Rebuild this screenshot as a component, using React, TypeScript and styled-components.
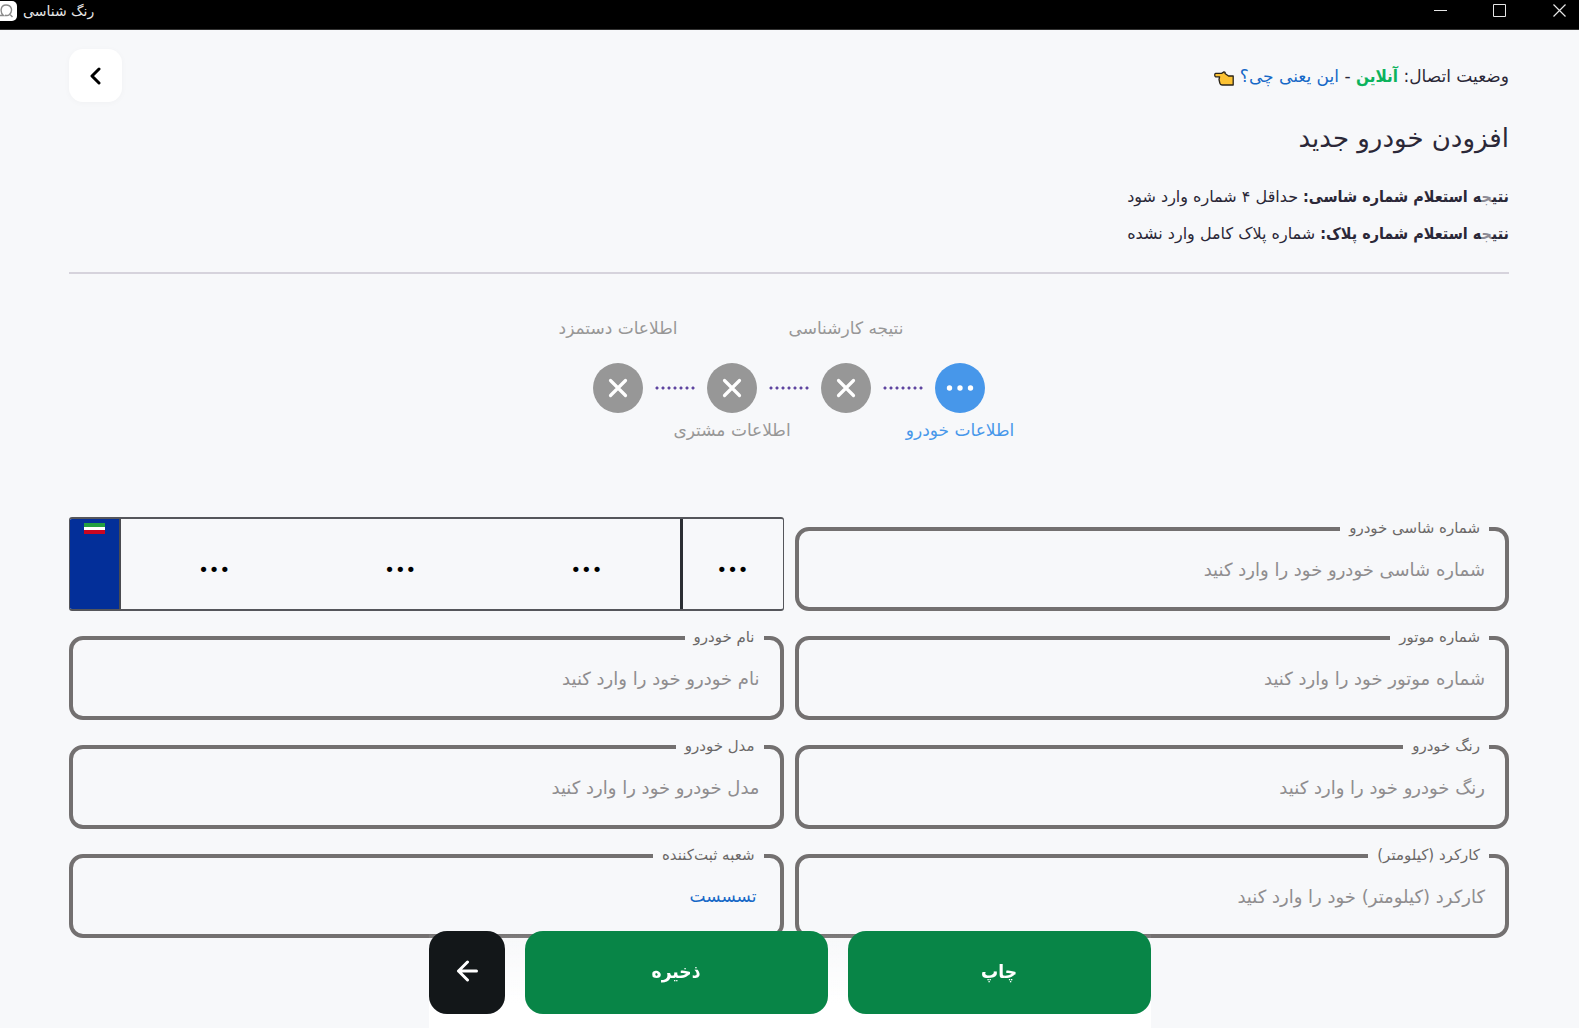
import React, { useId } from "react";
import styled, { createGlobalStyle } from "styled-components";

const GlobalStyle = createGlobalStyle`
  *, *::before, *::after { box-sizing: border-box; }
  body {
    margin: 0;
    background: #f7f8fa;
    color: #2b2838;
    font-family: "DejaVu Sans", "Noto Sans", sans-serif;
  }
  button, input { font-family: inherit; }
`;

const TitleBar = styled.header`
  display: flex;
  align-items: center;
  justify-content: space-between;
  height: 30px;
  padding-bottom: 8px;
  border-bottom: 1px solid #333;
  background: #000;
  color: #e6e6e6;
`;

const AppName = styled.div`
  display: flex;
  align-items: center;
  gap: 6px;
  font-size: 14px;
  line-height: 22px;
`;

const WindowButtons = styled.div`
  display: flex;
`;

const WindowButton = styled.button`
  display: grid;
  place-items: center;
  width: 59px;
  height: 22px;
  padding: 0;
  border: 0;
  background: none;
  color: #e6e6e6;
`;

const CloseButton = styled(WindowButton)`
  width: 40px;
  margin-left: 10px;
`;

const Main = styled.main`
  padding: 19px 70px 90px 69px;
`;

const Head = styled.section`
  display: flex;
  align-items: flex-start;
  justify-content: space-between;
  padding-bottom: 20px;
  border-bottom: 2px solid #d6d3dc;
`;

const Status = styled.p`
  margin: 0 0 14px;
  font-size: 17px;
  line-height: 54px;
`;

const CondensedStrong = styled.strong`
  font-family: "DejaVu Sans Condensed", "DejaVu Sans", sans-serif;
`;

const Online = styled(CondensedStrong)`
  color: #0cb35c;
`;

const HelpLink = styled.a`
  color: #1668c7;
  text-decoration: none;
`;

const PointingHand = styled.svg`
  margin-right: 6px;
  vertical-align: -4px;
`;

const Title = styled.h1`
  margin: 0 0 19px;
  font-size: 26px;
  font-weight: 400;
  line-height: 42px;
`;

const Result = styled.p`
  margin: 0;
  font-size: 16px;
  line-height: 37px;
`;

const Faint = styled.span`
  color: #8d8b95;
`;

const BackButton = styled.button`
  display: grid;
  place-items: center;
  width: 53px;
  height: 53px;
  padding: 0 2px 0 0;
  border: 0;
  border-radius: 14px;
  background: #fff;
  box-shadow: 0 1px 6px rgba(0, 0, 0, 0.03);
`;

const Stepper = styled.ol`
  display: flex;
  justify-content: center;
  margin: 42px 0 75px;
  padding: 0;
  list-style: none;
`;

const StepSlot = styled.div`
  display: flex;
  justify-content: center;
  height: 24px;
`;

const StepLabel = styled.span`
  flex: none;
  font-size: 17px;
  line-height: 24px;
  white-space: nowrap;
`;

const Circle = styled.span<{ $active?: boolean }>`
  display: grid;
  place-items: center;
  width: 50px;
  height: 50px;
  margin: 23px 0 5px;
  border-radius: 50%;
  background: ${(p) => (p.$active ? "#4797ea" : "#979797")};
`;

const Step = styled.li<{ $active?: boolean }>`
  display: flex;
  flex-direction: column;
  width: 50px;
  color: ${(p) => (p.$active ? "#4797ea" : "#979797")};
`;

const Connector = styled.li`
  width: 42px;
  height: 4px;
  margin: 70px 11px 0;
  background: radial-gradient(circle, #5f45a0 1px, transparent 2px) 0 0 / 6px 4px;
`;

const Form = styled.form`
  display: grid;
  grid-template-columns: repeat(2, minmax(0, 1fr));
  gap: 15px 11px;
`;

const Fieldset = styled.fieldset`
  min-width: 0;
  height: 94px;
  margin: 0;
  padding: 0 16px;
  border: 4px solid #737070;
  border-radius: 14px;
`;

const Legend = styled.legend`
  padding: 0 9px 2px;
  color: #6b6868;
  font-size: 15px;
  line-height: 22px;
`;

const Input = styled.input<{ $filled?: boolean }>`
  display: block;
  width: 100%;
  height: 56px;
  padding: 0 ${(p) => (p.$filled ? 7 : 4)}px;
  border: 0;
  outline: 0;
  background: transparent;
  color: #1668c7;
  font-size: ${(p) => (p.$filled ? 17 : 18)}px;

  &::placeholder { color: #8f8d8f; opacity: 1; overflow: visible; }
`;

const Plate = styled.div`
  display: flex;
  direction: ltr;
  height: 94px;
  border: solid #55565b;
  border-width: 2px 1px;
  border-radius: 3px;
  overflow: hidden;
`;

const PlateFlag = styled.div`
  flex: none;
  width: 51px;
  padding-top: 4px;
  border-right: 2px solid #4a4b50;
  background: #032f99;
`;

const Flag = styled.svg`
  display: block;
  margin: 0 auto;
`;

const PlateNumbers = styled.div`
  display: flex;
  flex: 1;
  min-width: 0;
`;

const PlateRegion = styled.div`
  display: flex;
  flex: none;
  width: 103px;
  border-left: 3px solid #2b2e33;
`;

const PlateInput = styled.input`
  flex: 1;
  min-width: 0;
  width: 0;
  height: 90px;
  padding: 10px 0 0;
  border: 0;
  outline: 0;
  background: transparent;
  color: #000;
  font-size: 18px;
  text-align: center;

  &::placeholder { color: #000; opacity: 1; }
`;

const Actions = styled.div`
  position: fixed;
  bottom: 0;
  left: 0;
  right: 0;
  display: flex;
  gap: 20px;
  width: 722px;
  margin: 0 auto;
  padding-bottom: 14px;
  background: linear-gradient(rgba(255, 255, 255, 0), #fff 75%);
`;

const ActionButton = styled.button<{ $dark?: boolean }>`
  display: grid;
  flex: ${(p) => (p.$dark ? "0 0 76px" : "1")};
  place-items: center;
  height: 83px;
  padding: 0 0 4px;
  border: 0;
  border-radius: 18px;
  background: ${(p) => (p.$dark ? "#131719" : "#088547")};
  color: #fff;
  font-family: "DejaVu Sans Condensed", "DejaVu Sans", sans-serif;
  font-size: 19px;
  font-weight: 700;
`;

type Field = { label: string; placeholder?: string; value?: string };

function TextField({ label, placeholder, value }: Field) {
  const id = useId();
  return (
    <Fieldset>
      <Legend>
        <label htmlFor={id}>{label}</label>
      </Legend>
      <Input id={id} type="text" placeholder={placeholder} defaultValue={value} $filled={!!value} />
    </Fieldset>
  );
}

const fields: Field[] = [
  { label: "شماره موتور", placeholder: "شماره موتور خود را وارد کنید" },
  { label: "نام خودرو", placeholder: "نام خودرو خود را وارد کنید" },
  { label: "رنگ خودرو", placeholder: "رنگ خودرو خود را وارد کنید" },
  { label: "مدل خودرو", placeholder: "مدل خودرو خود را وارد کنید" },
  { label: "کارکرد (کیلومتر)", placeholder: "کارکرد (کیلومتر) خود را وارد کنید" },
  { label: "شعبه ثبت‌کننده", value: "تسسست" },
];

const steps = [
  { label: "اطلاعات خودرو", active: true },
  { label: "نتیجه کارشناسی", above: true },
  { label: "اطلاعات مشتری" },
  { label: "اطلاعات دستمزد", above: true },
];

export default function App() {
  return (
    <>
      <GlobalStyle />
      <TitleBar>
        <AppName>
          <svg width="17" height="22" viewBox="0 0 17 22" aria-hidden="true">
            <rect x="-5" y="1" width="22" height="20" rx="5" fill="#fff" />
            <path d="M0 15.500h3.500C0 13 0 5 6 5s7 6 3.500 9.500c-1 1-3 1.200-4.500.8M9.500 14l3 3" fill="none" stroke="#8b8b8b" strokeWidth="1.400" />
          </svg>
          <span dir="rtl">رنگ شناسی</span>
        </AppName>
        <WindowButtons>
          <WindowButton type="button" aria-label="کوچک کردن">
            <svg width="13" height="13" viewBox="0 0 13 13"><path d="M0 6.500h13" stroke="currentColor" /></svg>
          </WindowButton>
          <WindowButton type="button" aria-label="بزرگ کردن">
            <svg width="13" height="13" viewBox="0 0 13 13"><path d="M.5.5h12v12H.5z" fill="none" stroke="currentColor" /></svg>
          </WindowButton>
          <CloseButton type="button" aria-label="بستن">
            <svg width="13" height="13" viewBox="0 0 13 13"><path d="m.5.5 12 12m0-12-12 12" stroke="currentColor" strokeWidth="1.200" /></svg>
          </CloseButton>
        </WindowButtons>
      </TitleBar>

      <Main dir="rtl">
        <Head>
          <div>
            <Status>
              وضعیت اتصال: <Online>آنلاین</Online> - <HelpLink href="#status">این یعنی چی؟</HelpLink>
              <PointingHand width="20" height="15" viewBox="0 0 20 15" aria-hidden="true">
                <path d="M1.600 2.400h6L10 .9c1 0 1.500.8 1 1.600l3.500 2.500h4.700v9H8.500c-1.500 0-2.500-.8-2.700-2L5 8.500l.6-2.700h-4C.4 5.400.4 2.800 1.600 2.400Z" fill="#fcc233" stroke="#2b251a" strokeWidth="1.300" strokeLinejoin="round" />
              </PointingHand>
            </Status>
            <Title>افزودن خودرو جدید</Title>
            <Result>
              <CondensedStrong>نتی<Faint>ج</Faint>ه استعلام شماره شاسی:</CondensedStrong> حداقل ۴ شماره وارد شود
            </Result>
            <Result>
              <CondensedStrong>نتی<Faint>ج</Faint>ه استعلام شماره پلاک:</CondensedStrong> شماره پلاک کامل وارد نشده
            </Result>
          </div>
          <BackButton type="button" aria-label="بازگشت">
            <svg width="12" height="18" viewBox="0 0 12 18"><path d="M10 2 3 9l7 7" fill="none" stroke="#000" strokeWidth="3" strokeLinecap="round" strokeLinejoin="round" /></svg>
          </BackButton>
        </Head>

        <Stepper>
          {steps.map((s, i) => (
            <React.Fragment key={s.label}>
              {i > 0 && <Connector aria-hidden="true" />}
              <Step $active={s.active}>
                <StepSlot>{s.above && <StepLabel>{s.label}</StepLabel>}</StepSlot>
                <Circle $active={s.active}>
                  {s.active ? (
                    <svg width="28" height="6" viewBox="0 0 28 6" fill="#fff"><circle cx="3.500" cy="3" r="2.700" /><circle cx="14" cy="3" r="2.700" /><circle cx="24.500" cy="3" r="2.700" /></svg>
                  ) : (
                    <svg width="20" height="20" viewBox="0 0 20 20"><path d="m2.500 2.500 15 15m0-15-15 15" stroke="#fff" strokeWidth="3.200" strokeLinecap="round" /></svg>
                  )}
                </Circle>
                <StepSlot>{!s.above && <StepLabel>{s.label}</StepLabel>}</StepSlot>
              </Step>
            </React.Fragment>
          ))}
        </Stepper>

        <Form>
          <TextField label="شماره شاسی خودرو" placeholder="شماره شاسی خودرو خود را وارد کنید" />
          <Plate>
            <PlateFlag>
              <Flag width="21" height="11" viewBox="0 0 21 11" aria-hidden="true">
                <path d="M0 0h21v4H0z" fill="#239f40" />
                <path d="M0 4h21v3H0z" fill="#fff" />
                <path d="M0 7h21v4H0z" fill="#ca0620" />
              </Flag>
            </PlateFlag>
            <PlateNumbers>
              <PlateInput aria-label="دو رقم اول پلاک" placeholder="•••" />
              <PlateInput aria-label="حرف پلاک" placeholder="•••" />
              <PlateInput aria-label="سه رقم پلاک" placeholder="•••" />
            </PlateNumbers>
            <PlateRegion>
              <PlateInput aria-label="کد شهر" placeholder="•••" />
            </PlateRegion>
          </Plate>
          {fields.map((f) => (
            <TextField key={f.label} {...f} />
          ))}
        </Form>
        <Actions>
          <ActionButton type="button">چاپ</ActionButton>
          <ActionButton type="button">ذخیره</ActionButton>
          <ActionButton type="button" $dark aria-label="مرحله بعد">
            <svg width="22" height="22" viewBox="0 0 22 22"><path d="M20.500 11H2.500m9-9-9 9 9 9" fill="none" stroke="#fff" strokeWidth="3" strokeLinecap="round" strokeLinejoin="round" /></svg>
          </ActionButton>
        </Actions>
      </Main>
    </>
  );
}
